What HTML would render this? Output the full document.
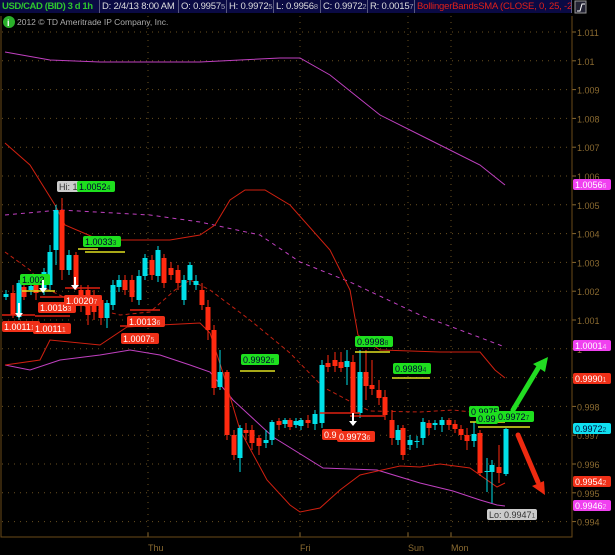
<!DOCTYPE html>
<html><head><meta charset="utf-8"><style>
body{margin:0;background:#000;width:615px;height:555px;overflow:hidden;font-family:"Liberation Sans",sans-serif}
svg{position:absolute;left:0;top:0}
#bar{position:absolute;left:0;top:0;height:13px;width:572px;font-size:9.5px;line-height:13px;}
#bar div{position:absolute;top:0;height:13px;background:#0a0a44;border-right:1px solid #5a5a80;color:#ddd;padding-left:2px;white-space:nowrap;overflow:hidden;box-sizing:border-box;letter-spacing:-0.2px}
#bar small{font-size:7.5px;opacity:.75}
</style></head><body>
<svg id="s" width="615" height="555" xmlns="http://www.w3.org/2000/svg"></svg>
<div id="bar">
<div style="left:0;width:100px;color:#2ec52e;font-weight:bold;letter-spacing:-0.4px">USD/CAD (BID) 3 d 1h</div>
<div style="left:100px;width:79px">D: 2/4/13 8:00 AM</div>
<div style="left:179px;width:48px">O: 0.9957<small>5</small></div>
<div style="left:227px;width:47px">H: 0.9972<small>5</small></div>
<div style="left:274px;width:47px">L: 0.9956<small>8</small></div>
<div style="left:321px;width:47px">C: 0.9972<small>2</small></div>
<div style="left:368px;width:47px">R: 0.0015<small>7</small></div>
<div style="left:415px;width:157px;color:#e0201a">BollingerBandsSMA (CLOSE, 0, 25, -2.0,...</div>
</div>
<script>
var s=document.getElementById('s'),h='';
function Y(p){return 32+(1.011-p)*28800;}
h+='<rect x="575" y="1" width="11" height="12" fill="#223" stroke="#999"/><path d="M577 11h3l2-7h3" stroke="#fff" fill="none"/>';
for(var i=0;i<=17;i++){var p=1.011-i*0.001,y=Y(p);
h+='<line x1="2" y1="'+y+'" x2="570" y2="'+y+'" stroke="#6a5020" stroke-dasharray="1 5"/>';
h+='<line x1="572" y1="'+y+'" x2="576" y2="'+y+'" stroke="#8a6a30"/>';
h+='<text x="577" y="'+(y+4)+'" fill="#8a6a30" font-size="9">'+(+p.toFixed(3))+'</text>';}
[148,300,408,451].forEach(function(x){h+='<line x1="'+x+'" y1="16" x2="'+x+'" y2="536" stroke="#6a5020" stroke-dasharray="1 5"/><line x1="'+x+'" y1="533" x2="'+x+'" y2="537" stroke="#8a6a30"/>';});
h+='<path d="M1 16V537H572V16" stroke="#6a4a18" fill="none"/>';
[['Thu',148],['Fri',300],['Sun',408],['Mon',451]].forEach(function(a){h+='<text x="'+a[1]+'" y="551" fill="#8a6a30" font-size="9">'+a[0]+'</text>';});
function pl(pts,c,d,w){h+='<polyline points="'+pts+'" fill="none" stroke="'+c+'" stroke-width="'+(w||1)+'"'+(d?' stroke-dasharray="'+d+'"':'')+'/>';}
pl('5,52 50,60 100,62 200,62 280,58 300,58 330,75 380,115 430,140 480,165 505,185','#c040c0');
pl('5,215 60,210 150,215 200,222 260,235 300,262 350,282 420,315 460,330 505,347','#c040c0','4 4');
pl('5,365 30,370 60,360 100,355 130,350 160,355 190,365 210,372 233,400 273,437 323,468 377,470 420,483 453,491 480,500 497,505 505,506','#c040c0');
pl('5,143 30,165 55,205 65,225 100,240 140,240 170,240 200,235 215,225 230,200 245,190 265,190 290,205 330,250 350,290 358,335 380,350 440,352 480,352 495,370 505,378','#d02010');
pl('5,252 30,270 45,288 80,305 120,315 150,312 175,290 190,280 210,290 250,320 290,353 323,387 353,403 370,411 420,412 453,410 480,413 503,415','#c02010','4 3');
pl('5,365 40,360 50,340 100,345 127,327 160,325 200,323 210,333 223,373 240,430 267,480 290,505 300,512 320,508 340,490 360,475 400,466 420,467 440,464 470,468 497,487 505,483','#d02010');
var C='#00e0e8',R='#ff2a10';
var cs=[[6,294,297,290,300,C],[13,293,315,285,318,R],[19,283,317,280,320,C],[24,287,297,282,300,R],[31,286,290,280,295,C],[36,285,293,280,300,R],[44,272,290,268,295,C],[50,252,285,245,290,C],[56,210,250,205,265,C],[62,210,270,198,280,R],[69,255,270,250,275,C],[76,255,285,252,290,R],[81,290,305,285,312,R],[88,290,315,285,325,R],[94,295,312,290,320,R],[101,300,318,295,325,R],[107,303,318,300,328,C],[113,285,305,280,310,C],[119,280,287,275,292,C],[125,280,290,275,295,R],[132,280,297,275,302,R],[139,276,300,270,305,C],[145,258,276,254,280,C],[152,260,275,255,280,R],[158,250,276,246,282,C],[164,258,283,254,288,R],[171,268,275,262,280,R],[178,270,283,265,290,R],[184,280,300,275,305,C],[190,265,280,262,285,C],[196,281,285,275,290,C],[202,290,305,283,310,R],[208,307,330,300,340,R],[214,330,388,325,395,R],[220,372,387,350,390,C],[227,372,435,370,440,R],[234,435,455,430,460,R],[240,428,458,425,472,C],[246,430,433,423,440,R],[252,430,443,425,450,R],[259,438,446,435,455,R],[266,440,443,430,448,C],[272,422,440,420,445,C],[279,421,425,418,430,R],[285,420,424,418,428,C],[290,420,427,418,430,R],[296,421,425,418,428,C],[301,420,426,418,430,C],[308,420,423,415,428,R],[315,414,424,410,430,C],[322,365,423,360,428,C],[328,363,367,355,372,R],[335,360,366,352,372,R],[341,362,368,352,372,R],[347,361,367,350,385,C],[353,362,413,355,418,R],[360,372,413,350,418,C],[366,372,386,350,400,R],[372,385,389,360,395,R],[379,390,398,380,405,R],[385,397,415,390,420,R],[392,420,438,410,445,R],[398,430,440,425,445,C],[403,428,455,425,460,R],[410,440,445,435,450,C],[417,441,442,436,448,C],[423,422,438,418,445,C],[429,423,428,420,435,R],[435,423,425,420,430,C],[442,420,425,417,432,C],[449,420,425,418,430,R],[455,424,429,420,433,R],[461,429,435,425,440,R],[467,435,441,428,450,R],[474,434,441,422,447,C],[480,433,473,430,476,R],[487,471,472,458,492,C],[492,465,472,460,503,C],[499,467,473,445,483,R],[506,429,474,428,476,C]];
cs.forEach(function(c){var w=5;h+='<line x1="'+c[0]+'" y1="'+c[3]+'" x2="'+c[0]+'" y2="'+c[4]+'" stroke="'+c[5]+'"/><rect x="'+(c[0]-w/2)+'" y="'+c[1]+'" width="'+w+'" height="'+Math.max(1,c[2]-c[1])+'" fill="'+c[5]+'"/>';});
function tag(x,y,t,bg,fg,sub,w){h+='<rect x="'+x+'" y="'+y+'" width="'+(w||38)+'" height="11" rx="2" fill="'+bg+'"/><text x="'+(x+2)+'" y="'+(y+9)+'" fill="'+fg+'" font-size="9">'+t+'<tspan font-size="7" opacity=".7">'+sub+'</tspan></text>';}
[[78,98,249,'#e0e020'],[85,125,252,'#e0e020'],[22,55,291,'#e0e020'],[240,275,371,'#e0e020'],[355,390,352,'#e0e020'],[392,430,378,'#e0e020'],[470,505,422,'#e0e020'],[478,530,427,'#e0e020'],[2,35,315,'#e02010'],[35,70,316,'#e02010'],[40,80,297,'#e02010'],[65,100,288,'#e02010'],[130,160,310,'#e02010'],[120,150,326,'#e02010'],[320,360,413,'#e02010'],[350,385,416,'#e02010']].forEach(function(l){h+='<line x1="'+l[0]+'" y1="'+l[2]+'" x2="'+l[1]+'" y2="'+l[2]+'" stroke="'+l[3]+'" stroke-width="1.5"/>';});
tag(57,181,'Hi: 1','#ccc','#333','',25);
tag(77,181,'1.0052','#1ee01e','#003','4');
tag(83,236,'1.0033','#1ee01e','#003','3');
tag(20,274,'1.002','#1ee01e','#003','',30);
tag(2,321,'1.0011','#f03018','#fff','1');
tag(33,323,'1.0011','#f03018','#fff','1');
tag(38,302,'1.0018','#f03018','#fff','3');
tag(64,295,'1.0020','#f03018','#fff','7');
tag(127,316,'1.0013','#f03018','#fff','6');
tag(121,333,'1.0007','#f03018','#fff','5');
tag(241,354,'0.9992','#1ee01e','#003','6');
tag(355,336,'0.9998','#1ee01e','#003','8');
tag(393,363,'0.9989','#1ee01e','#003','4');
tag(322,429,'0.9','#f03018','#fff','',20);
tag(337,431,'0.9973','#f03018','#fff','6');
tag(469,406,'0.9975','#1ee01e','#003','',30);
tag(476,413,'0.99','#1ee01e','#003','',22);
tag(496,411,'0.9972','#1ee01e','#003','7');
tag(487,509,'Lo: 0.9947','#ccc','#333','1',50);
tag(573,179,'1.0056','#f040f0','#fff','6');
tag(573,340,'1.0001','#f040f0','#fff','4');
tag(573,373,'0.9990','#f03018','#fff','1');
tag(573,423,'0.9972','#10e0f0','#003','2');
tag(573,476,'0.9954','#f03018','#fff','2');
tag(573,500,'0.9946','#f040f0','#fff','2');
[[19,303,318],[43,280,293],[75,277,290],[353,413,426]].forEach(function(a){h+='<line x1="'+a[0]+'" y1="'+a[1]+'" x2="'+a[0]+'" y2="'+(a[2]-3)+'" stroke="#fff" stroke-width="2"/><path d="M'+(a[0]-4)+' '+(a[2]-5)+'h8l-4 5z" fill="#fff"/>';});
h+='<line x1="513" y1="410" x2="540" y2="365" stroke="#22dd22" stroke-width="5" stroke-linecap="round"/><path d="M548 357l-3 15l-12 -8z" fill="#22dd22"/>';
h+='<line x1="518" y1="435" x2="538" y2="482" stroke="#ee2a10" stroke-width="5" stroke-linecap="round"/><path d="M545 495l-13 -9l12 -5z" fill="#ee2a10"/>';
h+='<circle cx="9" cy="22" r="6" fill="#2ab02a"/><text x="7" y="26" fill="#fff" font-size="9" font-weight="bold">i</text>';
h+='<text x="17" y="25" fill="#aaa" font-size="8.5">2012 © TD Ameritrade IP Company, Inc.</text>';
s.innerHTML=h;
</script>
</body></html>
